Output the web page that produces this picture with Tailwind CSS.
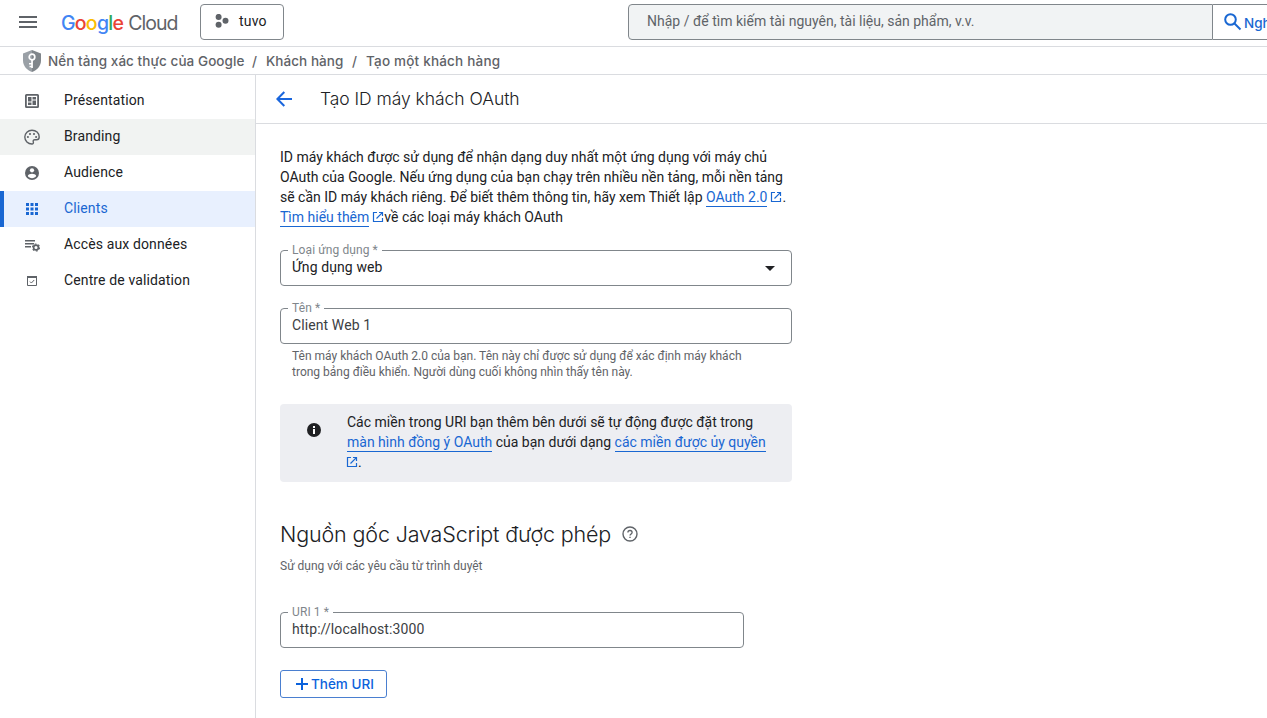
<!DOCTYPE html>
<html lang="vi">
<head>
<meta charset="utf-8">
<title>Tạo ID máy khách OAuth</title>
<script src="https://cdn.jsdelivr.net/npm/@tailwindcss/browser@4"></script>
</head>
<body class="h-[718px] overflow-hidden bg-white font-['Roboto',sans-serif] text-sm leading-5 text-[#202124] whitespace-nowrap">
<svg class="hidden">
  <symbol id="ext" viewBox="0 0 12 12"><path d="M5 1.500H1.500v9h9V7M7 1.500h3.500V5M10.300 1.700 4.500 7.500" fill="none" stroke="currentColor" stroke-width="1.200"/></symbol>
</svg>
<div class="flex h-full flex-col">
  <header class="flex h-[47px] shrink-0 items-start border-b border-[#dadce0] pt-1">
    <svg class="ml-[19px] mt-[11px] h-[14px] w-[18px] shrink-0" viewBox="0 0 18 14" fill="#5f6368"><path d="M0 1h18v2H0zM0 6h18v2H0zM0 11h18v2H0z"/></svg>
    <div class="ml-6 flex h-9 w-[117px] shrink-0 items-center gap-[5px] pt-px font-['Inter',sans-serif] text-[19.5px] text-[#5f6368]">
      <span class="font-medium tracking-[-0.75px]"><span class="text-[#4285f4]">G</span><span class="text-[#ea4335]">o</span><span class="text-[#fbbc04]">o</span><span class="text-[#4285f4]">g</span><span class="text-[#34a853]">l</span><span class="text-[#ea4335]">e</span></span>
      <span class="tracking-[-0.95px]">Cloud</span>
    </div>
    <div class="ml-[22px] flex h-9 w-[84px] shrink-0 items-center rounded-[4px] border border-[#80868b] pl-[14px]">
      <svg class="-mt-0.5 h-[14px] w-[14px]" viewBox="0 0 14 14" fill="#5f6368"><circle cx="3.600" cy="2.900" r="3"/><circle cx="3.600" cy="10.800" r="3"/><circle cx="10.500" cy="6.800" r="3"/></svg>
      <span class="ml-[10px] pb-0.5 tracking-[0.2px]">tuvo</span>
    </div>
    <div class="ml-[344px] flex h-9 w-[585px] shrink-0 items-center rounded-l-[4px] border border-[#80868b] bg-[#f1f3f4] pb-0.5 pl-[18px] text-[#5f6368]">Nhập / để tìm kiếm tài nguyên, tài liệu, sản phẩm, v.v.</div>
    <div class="flex h-9 w-[90px] shrink-0 items-center border-y border-[#80868b] pl-[11px] font-['Inter',sans-serif] text-[13.500px] font-medium text-[#1967d2]">
      <svg class="h-[18px] w-[18px] shrink-0" viewBox="0 0 18 18" fill="none" stroke="currentColor" stroke-width="2"><circle cx="6.500" cy="6.500" r="5.300"/><path d="m10.500 10.500 6 6"/></svg>
      <span class="ml-[2px] pt-px">Nghiên</span>
    </div>
  </header>
  <nav class="flex h-7 shrink-0 items-center border-b border-[#dadce0] pl-[23px] font-['Inter',sans-serif] text-[13.500px] font-medium tracking-[0.06px] text-[#5f6368]">
    <svg class="h-[22px] w-[18px] shrink-0" viewBox="0 0 18 22"><path d="M9 0 0 3.600v7C0 16 4 20.600 9 22z" fill="#9aa0a6"/><path d="m9 0 9 3.600v7C18 16 14 20.600 9 22z" fill="#80868b"/><circle cx="9" cy="7" r="2.800" fill="none" stroke="#fff" stroke-width="1.700"/><path d="M8.200 9.500h1.700V18H8.200zM6 13h2.500v1.400H6zM6.500 15.800h2v1.400h-2z" fill="#fff"/></svg>
    <span class="ml-[7px] w-[197px]">Nền tảng xác thực của Google</span>
    <span class="w-[21px] pl-[7px]">/</span>
    <span class="w-[78px]">Khách hàng</span>
    <span class="w-[22px] pl-[8px]">/</span>
    <span class="tracking-[0.2px]">Tạo một khách hàng</span>
  </nav>
  <div class="flex min-h-0 flex-1">
    <aside class="flex w-64 shrink-0 flex-col border-r border-[#dadce0] pt-2 tracking-[0.13px]">
      <a class="flex h-9 items-center pl-6"><svg class="h-4 w-4" viewBox="0 0 16 16"><rect x="1.900" y="1.900" width="12.200" height="12.200" rx=".6" fill="none" stroke="#5f6368" stroke-width="1.800"/><path d="M4 4h3.500v4.500H4zM8.500 4H12v2.500H8.500zM4 9.500h3.500V12H4zM8.500 7.500H12V12H8.500z" fill="#5f6368"/></svg><span class="ml-6 pb-0.5">Présentation</span></a>
      <a class="flex h-9 items-center bg-[#f1f3f2] pl-6"><svg class="h-4 w-4" viewBox="0 0 16 16"><path d="M8 1.200c-4 0-7.200 3-7.200 6.900 0 3.800 3.100 6.900 7.200 6.900 1.100 0 1.700-1 1.300-2-.5-1.300.2-2.300 1.500-2.300h1.700c1.500 0 2.700-1.100 2.700-2.800C15.200 4 12 1.200 8 1.200z" fill="none" stroke="#5f6368" stroke-width="1.400"/><g fill="#5f6368"><circle cx="3.900" cy="8" r="1.050"/><circle cx="6" cy="5" r="1.050"/><circle cx="10" cy="5" r="1.050"/><circle cx="12.100" cy="8" r="1.050"/></g></svg><span class="ml-6 pb-0.5">Branding</span></a>
      <a class="flex h-9 items-center pl-6"><svg class="h-4 w-4" viewBox="0 0 16 16"><circle cx="8" cy="8" r="7" fill="#5f6368"/><circle cx="8" cy="5.300" r="2.100" fill="#fff"/><path d="M3.800 11c0-1.500 2.800-2.200 4.200-2.200s4.200.7 4.200 2.200c-.9 1.400-2.400 2.200-4.200 2.200S4.700 12.400 3.800 11z" fill="#fff"/></svg><span class="ml-6 pb-0.5">Audience</span></a>
      <a class="flex h-9 items-center border-l-4 border-[#1967d2] bg-[#e8f0fe] pl-5 text-[#1967d2]"><svg class="h-4 w-4" viewBox="0 0 16 16" fill="currentColor"><path d="M2 2h3v3H2zM6.500 2h3v3h-3zM11 2h3v3h-3zM2 6.500h3v3H2zM6.500 6.500h3v3h-3zM11 6.500h3v3h-3zM2 11h3v3H2zM6.500 11h3v3h-3zM11 11h3v3h-3z"/></svg><span class="ml-6 pb-0.5">Clients</span></a>
      <a class="flex h-9 items-center pl-6"><svg class="h-4 w-4" viewBox="0 0 16 16"><path d="M1 3h10v1.500H1zM1 6h9v1.500H1zM1 9h6v1.500H1z" fill="#5f6368"/><circle cx="12" cy="10.500" r="2.400" fill="none" stroke="#5f6368" stroke-width="1.700"/><circle cx="12" cy="10.500" r="3.500" fill="none" stroke="#5f6368" stroke-width="1.200" stroke-dasharray="1.830 1.830"/></svg><span class="ml-6 pb-0.5">Accès aux données</span></a>
      <a class="flex h-9 items-center pl-6"><svg class="h-4 w-4" viewBox="0 0 16 16"><path d="M3.500 4.500h9v8h-9z" fill="none" stroke="#5f6368"/><path d="M3 3h10v2H3z" fill="#5f6368"/><path d="m6 8.600 1.400 1.400L10.200 7" fill="none" stroke="#5f6368"/></svg><span class="ml-6 pb-0.5">Centre de validation</span></a>
    </aside>
    <main class="flex-1">
      <div class="flex h-[49px] items-center border-b border-[#dadce0] pl-5">
        <svg class="h-4 w-4" viewBox="0 0 16 16" fill="none" stroke="#1a66dd" stroke-width="2"><path d="M16 8H1.500M8.300 1 1.400 8l6.900 7"/></svg>
        <h1 class="ml-7 font-['Inter',sans-serif] text-[17.500px] font-light tracking-[-0.05px]">Tạo ID máy khách OAuth</h1>
      </div>
      <div class="flex w-[536px] flex-col pl-6 pt-[23px]">
        <p>ID máy khách được sử dụng để nhận dạng duy nhất một ứng dụng với máy chủ<br>OAuth của Google. Nếu ứng dụng của bạn chạy trên nhiều nền tảng, mỗi nền tảng<br>sẽ cần ID máy khách riêng. Để biết thêm thông tin, hãy xem Thiết lập <a class="border-b border-[#1967d2] pb-px text-[#1967d2]">OAuth 2.0</a><svg class="ml-[3px] inline h-3 w-3 align-[-1px] text-[#1967d2]"><use href="#ext"/></svg>.<br><a class="border-b border-[#1967d2] pb-px text-[#1967d2]">Tìm hiểu thêm</a><svg class="ml-[3px] inline h-3 w-3 align-[-1px] text-[#1967d2]"><use href="#ext"/></svg>về các loại máy khách OAuth</p>
        <div class="relative mt-[23px] flex h-9 items-center justify-between rounded-[4px] border border-[#80868b] pb-0.5 pl-[11px] pr-4 tracking-[0.1px]">
          <span class="absolute left-[7px] top-[-9px] bg-white px-1 text-xs leading-4 text-[#80868b]">Loại ứng dụng *</span>
          <span>Ứng dụng web</span>
          <svg class="mt-0.5 h-[5px] w-[10px]" viewBox="0 0 10 5"><path d="M0 0h10L5 5z" fill="#202124"/></svg>
        </div>
        <div class="relative mt-[22px] flex h-9 items-center rounded-[4px] border border-[#80868b] pb-0.5 pl-[11px] tracking-[0.1px] text-[#3c4043]">
          <span class="absolute left-[7px] top-[-9px] bg-white px-1 text-xs leading-4 text-[#80868b]">Tên *</span>
          <span>Client Web 1</span>
        </div>
        <p class="ml-3 mt-1 text-xs leading-4 text-[#5f6368]">Tên máy khách OAuth 2.0 của bạn. Tên này chỉ được sử dụng để xác định máy khách<br>trong bảng điều khiển. Người dùng cuối không nhìn thấy tên này.</p>
        <div class="mt-6 flex h-[78px] rounded-[4px] bg-[#edeef2] pl-[27px] pt-2">
          <svg class="mt-[11px] h-[14px] w-[14px] shrink-0" viewBox="0 0 14 14"><circle cx="7" cy="7" r="7" fill="#202124"/><path d="M6 3h2v2H6zM6 6h2v5H6z" fill="#fff"/></svg>
          <p class="ml-[26px]">Các miền trong URI bạn thêm bên dưới sẽ tự động được đặt trong<br><a class="border-b border-[#1967d2] pb-px text-[#1967d2]">màn hình đồng ý OAuth</a> của bạn dưới dạng <a class="border-b border-[#1967d2] pb-px text-[#1967d2]">các miền được ủy quyền</a><br><svg class="-ml-px inline h-3 w-3 align-[-1px] text-[#1967d2]"><use href="#ext"/></svg>.</p>
        </div>
        <div class="mt-9 flex h-8 items-center">
          <h2 class="w-[342px] pb-px font-['Inter',sans-serif] text-[21.500px] font-light tracking-[-0.15px]">Nguồn gốc JavaScript được phép</h2>
          <svg class="h-4 w-4" viewBox="0 0 16 16"><circle cx="8" cy="8" r="7" fill="none" stroke="#5f6368" stroke-width="1.400"/><path d="M5.900 6.500c0-1.200.9-2 2.100-2s2.100.8 2.100 1.900c0 1.400-2.100 1.600-2.100 3.200" fill="none" stroke="#5f6368" stroke-width="1.300"/><path d="M7.300 10.700h1.400v1.400H7.300z" fill="#5f6368"/></svg>
        </div>
        <p class="mt-2 text-xs leading-4 text-[#5f6368]">Sử dụng với các yêu cầu từ trình duyệt</p>
        <div class="relative mt-[38px] flex h-9 w-[464px] items-center rounded-[4px] border border-[#80868b] pb-0.5 pl-[11px] tracking-[0.1px] text-[#3c4043]">
          <span class="absolute left-[7px] top-[-9px] bg-white px-1 text-xs leading-4 text-[#80868b]">URI 1 *</span>
          <span>http://localhost:3000</span>
        </div>
        <button class="mt-[22px] flex h-7 w-[107px] items-center rounded-[3px] border border-[#4a7fd0] pl-[15px] font-['Inter',sans-serif] text-[13.500px] font-medium text-[#0b62dc]">
          <svg class="h-3 w-3" viewBox="0 0 12 12" fill="currentColor"><path d="M5 0h2v12H5zM0 5h12v2H0z"/></svg><span class="ml-[3px]">Thêm URI</span>
        </button>
      </div>
    </main>
  </div>
</div>
</body>
</html>
